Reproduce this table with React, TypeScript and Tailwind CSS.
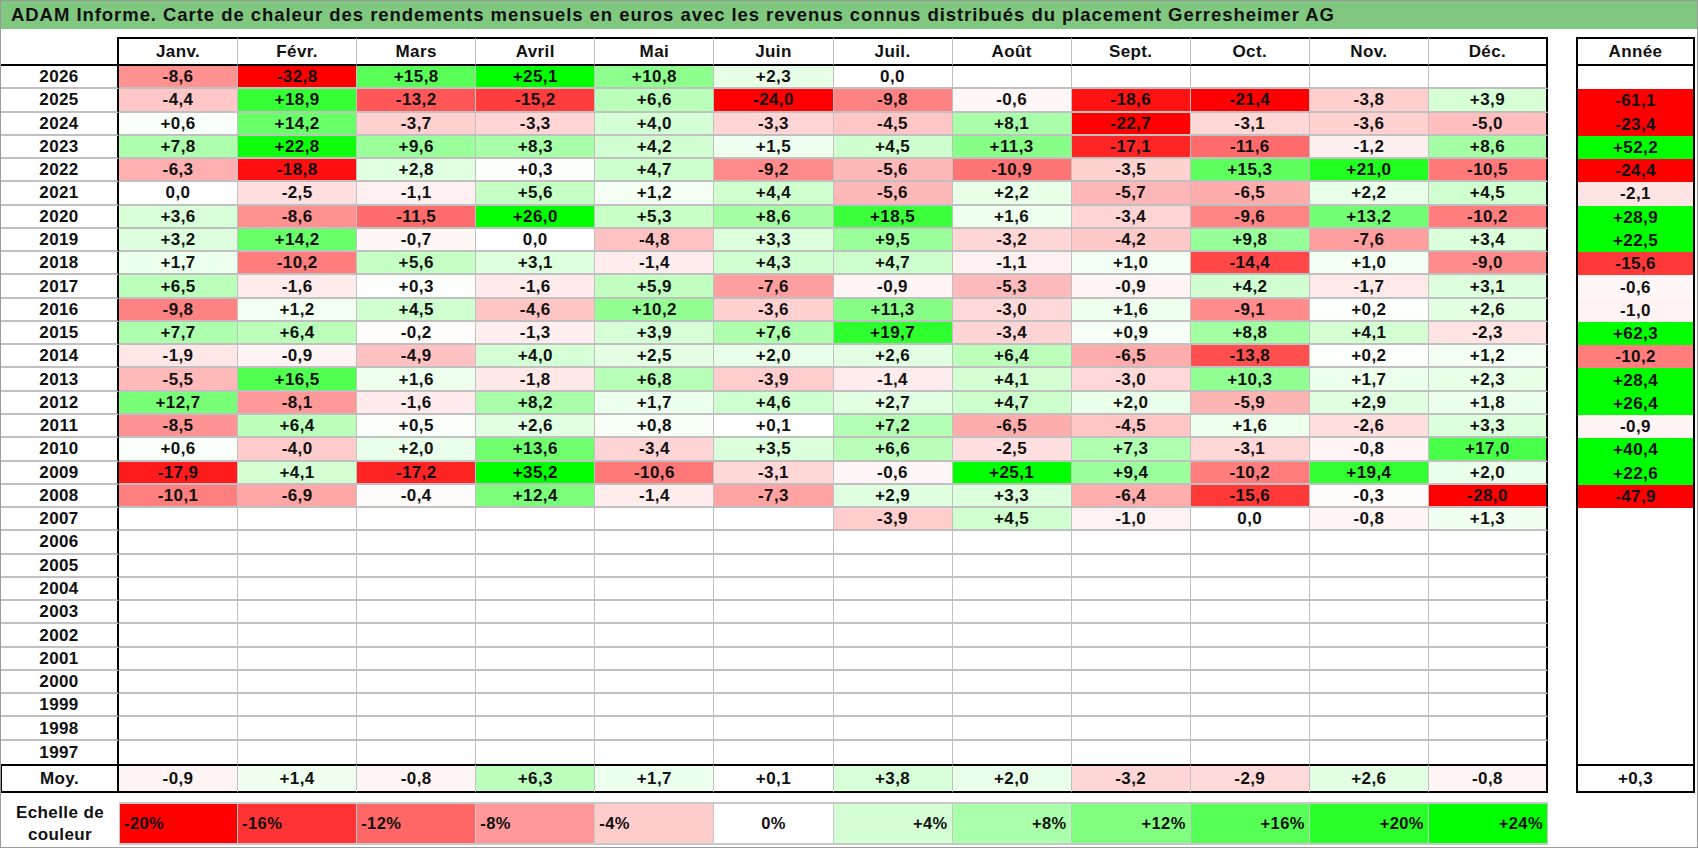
import React from "react";

const MONTHS = ["Janv.", "Févr.", "Mars", "Avril", "Mai", "Juin", "Juil.", "Août", "Sept.", "Oct.", "Nov.", "Déc."];

type Row = { year: string; m: string[]; y: string };

const RAW: [string, string][] = [
  ["2026", "-8,6|-32,8|+15,8|+25,1|+10,8|+2,3|0,0||||||"],
  ["2025", "-4,4|+18,9|-13,2|-15,2|+6,6|-24,0|-9,8|-0,6|-18,6|-21,4|-3,8|+3,9|-61,1"],
  ["2024", "+0,6|+14,2|-3,7|-3,3|+4,0|-3,3|-4,5|+8,1|-22,7|-3,1|-3,6|-5,0|-23,4"],
  ["2023", "+7,8|+22,8|+9,6|+8,3|+4,2|+1,5|+4,5|+11,3|-17,1|-11,6|-1,2|+8,6|+52,2"],
  ["2022", "-6,3|-18,8|+2,8|+0,3|+4,7|-9,2|-5,6|-10,9|-3,5|+15,3|+21,0|-10,5|-24,4"],
  ["2021", "0,0|-2,5|-1,1|+5,6|+1,2|+4,4|-5,6|+2,2|-5,7|-6,5|+2,2|+4,5|-2,1"],
  ["2020", "+3,6|-8,6|-11,5|+26,0|+5,3|+8,6|+18,5|+1,6|-3,4|-9,6|+13,2|-10,2|+28,9"],
  ["2019", "+3,2|+14,2|-0,7|0,0|-4,8|+3,3|+9,5|-3,2|-4,2|+9,8|-7,6|+3,4|+22,5"],
  ["2018", "+1,7|-10,2|+5,6|+3,1|-1,4|+4,3|+4,7|-1,1|+1,0|-14,4|+1,0|-9,0|-15,6"],
  ["2017", "+6,5|-1,6|+0,3|-1,6|+5,9|-7,6|-0,9|-5,3|-0,9|+4,2|-1,7|+3,1|-0,6"],
  ["2016", "-9,8|+1,2|+4,5|-4,6|+10,2|-3,6|+11,3|-3,0|+1,6|-9,1|+0,2|+2,6|-1,0"],
  ["2015", "+7,7|+6,4|-0,2|-1,3|+3,9|+7,6|+19,7|-3,4|+0,9|+8,8|+4,1|-2,3|+62,3"],
  ["2014", "-1,9|-0,9|-4,9|+4,0|+2,5|+2,0|+2,6|+6,4|-6,5|-13,8|+0,2|+1,2|-10,2"],
  ["2013", "-5,5|+16,5|+1,6|-1,8|+6,8|-3,9|-1,4|+4,1|-3,0|+10,3|+1,7|+2,3|+28,4"],
  ["2012", "+12,7|-8,1|-1,6|+8,2|+1,7|+4,6|+2,7|+4,7|+2,0|-5,9|+2,9|+1,8|+26,4"],
  ["2011", "-8,5|+6,4|+0,5|+2,6|+0,8|+0,1|+7,2|-6,5|-4,5|+1,6|-2,6|+3,3|-0,9"],
  ["2010", "+0,6|-4,0|+2,0|+13,6|-3,4|+3,5|+6,6|-2,5|+7,3|-3,1|-0,8|+17,0|+40,4"],
  ["2009", "-17,9|+4,1|-17,2|+35,2|-10,6|-3,1|-0,6|+25,1|+9,4|-10,2|+19,4|+2,0|+22,6"],
  ["2008", "-10,1|-6,9|-0,4|+12,4|-1,4|-7,3|+2,9|+3,3|-6,4|-15,6|-0,3|-28,0|-47,9"],
  ["2007", "||||||-3,9|+4,5|-1,0|0,0|-0,8|+1,3|"],
];

const ROWS: Row[] = (() => {
  const rows: Row[] = RAW.map(([year, s]) => {
    const parts = s.split("|");
    return { year, m: parts.slice(0, 12), y: parts[12] ?? "" };
  });
  for (let y = 2006; y >= 1997; y--) {
    rows.push({ year: String(y), m: Array(12).fill(""), y: "" });
  }
  return rows;
})();

const AVG = "-0,9|+1,4|-0,8|+6,3|+1,7|+0,1|+3,8|+2,0|-3,2|-2,9|+2,6|-0,8".split("|");
const AVG_YEAR = "+0,3";

function colorFor(v: string, negMax: number, posMax: number): string {
  if (!v) return "#ffffff";
  const n = parseFloat(v.replace(",", "."));
  if (n < 0) {
    const t = Math.min(-n / negMax, 1);
    const c = Math.round(255 * (1 - t));
    return `rgb(255,${c},${c})`;
  }
  if (n > 0) {
    const t = Math.min(n / posMax, 1);
    const c = Math.round(255 * (1 - t));
    return `rgb(${c},255,${c})`;
  }
  return "#ffffff";
}

const SCALE: { label: string; color: string; align: string }[] = [
  { label: "-20%", color: "#ff0000", align: "justify-start pl-[4px]" },
  { label: "-16%", color: "#ff3333", align: "justify-start pl-[4px]" },
  { label: "-12%", color: "#ff6666", align: "justify-start pl-[4px]" },
  { label: "-8%", color: "#ff9999", align: "justify-start pl-[4px]" },
  { label: "-4%", color: "#ffcccc", align: "justify-start pl-[4px]" },
  { label: "0%", color: "#ffffff", align: "justify-center" },
  { label: "+4%", color: "#d4ffd4", align: "justify-end pr-[4px]" },
  { label: "+8%", color: "#aaffaa", align: "justify-end pr-[4px]" },
  { label: "+12%", color: "#80ff80", align: "justify-end pr-[4px]" },
  { label: "+16%", color: "#55ff55", align: "justify-end pr-[4px]" },
  { label: "+20%", color: "#2aff2a", align: "justify-end pr-[4px]" },
  { label: "+24%", color: "#00ff00", align: "justify-end pr-[4px]" },
];

export default function App() {
  const lastIdx = ROWS.length - 1;
  return (
    <div className="w-[1698px] h-[848px] bg-white border border-[#9a9a9a] overflow-hidden font-['Liberation_Sans',Arial,sans-serif] font-bold text-[#111111] text-[17px] leading-none tracking-[0.4px]">
      {/* Title */}
      <div className="h-[28px] bg-[#80c880] flex items-center pl-[10px] text-[18.5px] tracking-[0.95px]">
        ADAM Informe. Carte de chaleur des rendements mensuels en euros avec les revenus connus distribués du placement Gerresheimer AG
      </div>

      <div className="mt-[8px] flex">
        {/* Left table */}
        <div className="w-[1547px] grid grid-cols-[118px_repeat(12,minmax(0,1fr))] grid-rows-[29px_repeat(30,minmax(0,1fr))_29px] h-[756px]">
          {/* header */}
          <div className="border-r-2 border-b-2 border-black" />
          {MONTHS.map((m, i) => (
            <div
              key={m}
              className={`flex items-center justify-center border-t-2 border-b-2 border-black ${
                i === 11 ? "border-r-2 border-r-black" : "border-r border-r-[#c0c0c0]"
              }`}
            >
              {m}
            </div>
          ))}
          {/* data */}
          {ROWS.map((r, ri) => (
            <React.Fragment key={r.year}>
              <div
                className={`flex items-center justify-center border-r-2 border-r-black ${
                  ri === lastIdx ? "" : "border-b-2 border-b-[#c0c0c0]"
                }`}
              >
                {r.year}
              </div>
              {r.m.map((v, ci) => (
                <div
                  key={ci}
                  style={{ backgroundColor: colorFor(v, 20, 24) }}
                  className={`flex items-center justify-center ${ri === lastIdx ? "" : "border-b-2 border-b-[#c0c0c0]"} ${
                    ci === 11 ? "border-r-2 border-r-black" : "border-r border-r-[#c0c0c0]"
                  }`}
                >
                  {v}
                </div>
              ))}
            </React.Fragment>
          ))}
          {/* average */}
          <div className="flex items-center justify-center border-t-2 border-b-2 border-l border-r-2 border-black">Moy.</div>
          {AVG.map((v, ci) => (
            <div
              key={ci}
              style={{ backgroundColor: colorFor(v, 20, 24) }}
              className={`flex items-center justify-center border-t-2 border-b-2 border-t-black border-b-black ${
                ci === 11 ? "border-r-2 border-r-black" : "border-r border-r-[#c0c0c0]"
              }`}
            >
              {v}
            </div>
          ))}
        </div>

        {/* Année column */}
        <div className="ml-[28px] w-[119px] grid grid-rows-[29px_repeat(30,minmax(0,1fr))_29px] h-[756px]">
          <div className="flex items-center justify-center border-2 border-black">Année</div>
          {ROWS.map((r) => (
            <div
              key={r.year}
              style={{ backgroundColor: colorFor(r.y, 20, 20) }}
              className="flex items-center justify-center border-l-2 border-r-2 border-black"
            >
              {r.y}
            </div>
          ))}
          <div className="flex items-center justify-center border-2 border-black">{AVG_YEAR}</div>
        </div>
      </div>

      {/* Color scale */}
      <div className="mt-[9px] w-[1547px] grid grid-cols-[118px_repeat(12,minmax(0,1fr))] h-[43px]">
        <div className="flex flex-col items-center justify-center gap-[5px] text-[17px]">
          <span>Echelle de</span>
          <span>couleur</span>
        </div>
        {SCALE.map((s, i) => (
          <div
            key={s.label}
            style={{ backgroundColor: s.color }}
            className={`flex items-center ${s.align} border-t-2 border-b-2 border-[#c8c8c8] ${i === 0 ? "border-l" : ""} border-r text-[16.5px]`}
          >
            {s.label}
          </div>
        ))}
      </div>
    </div>
  );
}
